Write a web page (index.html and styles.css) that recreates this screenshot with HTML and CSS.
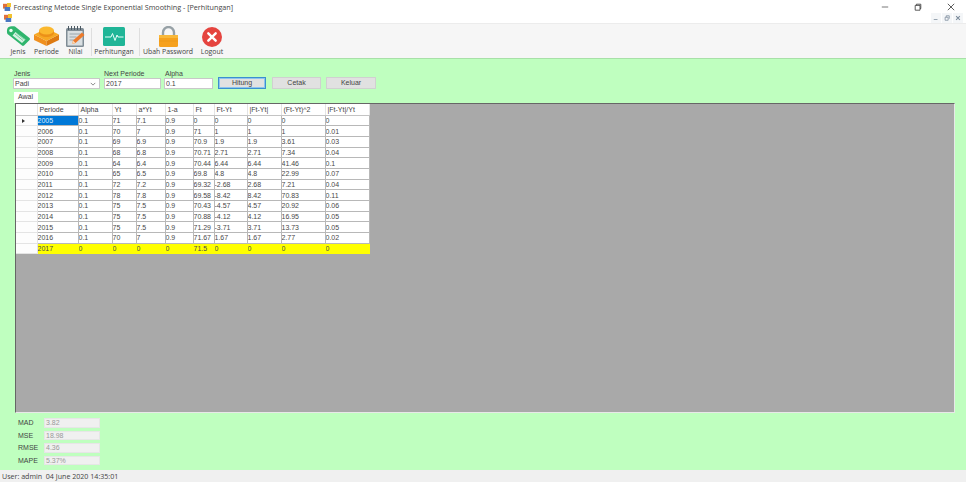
FILE: index.html
```html
<!DOCTYPE html>
<html lang="id">
<head>
<meta charset="utf-8">
<title>Forecasting Metode Single Exponential Smoothing</title>
<link rel="stylesheet" href="styles.css">
</head>
<body>
<div class="window">
  <header class="titlebar">
    <svg class="appicon" viewBox="0 0 10 10"><rect x="0" y="1" width="6" height="6" fill="#e2703a"/><rect x="5" y="0" width="5" height="5" fill="#f2c230"/><rect x="2" y="5" width="7" height="5" fill="#4a78c2"/></svg>
    <span class="title">Forecasting Metode Single Exponential Smoothing - [Perhitungan]</span>
    <div class="winbtns">
      <svg viewBox="0 0 10 10"><path d="M1 5h8" stroke="#555" fill="none"/></svg>
      <svg viewBox="0 0 10 10"><path d="M1.500 3h6v6h-6zM3 3V1.500h5.500V7H7.500" stroke="#333" fill="none"/></svg>
      <svg viewBox="0 0 10 10"><path d="M1 1l8 8M9 1l-8 8" stroke="#333" fill="none"/></svg>
    </div>
  </header>
  <div class="menubar">
    <svg class="appicon" viewBox="0 0 10 10"><rect x="0" y="1" width="6" height="6" fill="#e2703a"/><rect x="5" y="0" width="5" height="5" fill="#f2c230"/><rect x="2" y="5" width="7" height="5" fill="#4a78c2"/></svg>
    <div class="mdibtns">
      <span class="mdibtn"><svg viewBox="0 0 8 8"><path d="M1 6h5" stroke="#7a8a99" fill="none"/></svg></span>
      <span class="mdibtn"><svg viewBox="0 0 8 8"><path d="M1.500 3h4v4h-4zM3 3V1h4v4" stroke="#7a8a99" fill="none"/></svg></span>
      <span class="mdibtn"><svg viewBox="0 0 8 8"><path d="M1.500 1.500l5 5M6.500 1.500l-5 5" stroke="#7a8a99" stroke-width="1.400" fill="none"/></svg></span>
    </div>
  </div>
  <nav class="toolbar">
    <div class="tool tool-jenis">
      <svg viewBox="0 0 24 20"><path d="M2 1.500C3 .500 7 0 9 .500L23.500 12c.6.500.6 1.500 0 2L18 19.500c-.6.600-1.500.6-2 0L1.500 8C.500 6.500 1 2.500 2 1.500z" fill="#2fb56d"/><path d="M9.500 6L19.500 13.500 16 17 6.500 9.500z" fill="#d6f2e2"/><path d="M9 8l8 6.500M10.500 7l8 6.500" stroke="#2fb56d" stroke-width=".6"/><circle cx="5" cy="4.500" r="1.700" fill="#eafff2"/></svg>
      <span>Jenis</span>
    </div>
    <div class="tool tool-periode">
      <svg viewBox="0 0 25 20"><path d="M0 8.500L12.500 15v5L0 14z" fill="#f0901f"/><path d="M25 8.500L12.500 15v5L25 14z" fill="#dd7a12"/><path d="M12.500 2.500L25 8.500 12.500 15 0 8.500z" fill="#f7a823"/><path d="M5 4.500v2.500c0 2.200 3.400 4 7.500 4s7.500-1.800 7.500-4V4.500z" fill="#ec9018"/><ellipse cx="12.500" cy="4.500" rx="7.500" ry="4" fill="#fbb82e"/></svg>
      <span>Periode</span>
    </div>
    <div class="tool tool-nilai">
      <svg viewBox="0 0 19 21"><rect x="0" y="2" width="18" height="19" rx="1.500" fill="#7f8c95"/><rect x="1.500" y="5" width="15" height="14.500" fill="#d9dfe2"/><path d="M2.500 0v4M5.500 0v4M8.500 0v4M11.500 0v4M14.500 0v4" stroke="#4c5a63"/><path d="M3.500 8h11M3.500 11h7M3.500 14h5" stroke="#9aa6ad"/><path d="M6 18l1-3.500 9-8 2.500 2.500-9 8z" fill="#ec7a2b"/><path d="M6 18l1-3.500 2.500 2.500z" fill="#f8d9b5"/></svg>
      <span>Nilai</span>
    </div>
    <i class="sep"></i>
    <div class="tool tool-hitung">
      <svg viewBox="0 0 22 19"><rect width="22" height="19" rx="1.500" fill="#1fb597"/><path d="M2 10h6l1.500-3.500 2.500 7 2-5.500 1 2h5.500" stroke="#e8fff9" stroke-width="1" fill="none"/></svg>
      <span>Perhitungan</span>
    </div>
    <i class="sep"></i>
    <div class="tool tool-pass">
      <svg viewBox="0 0 19 21"><path d="M4 10V6.500a5.500 5.500 0 0 1 11 0V10" fill="none" stroke="#97a1a6" stroke-width="2.400"/><rect x="0" y="9" width="19" height="12" rx="1.500" fill="#f6a11e"/><rect x="0" y="9" width="19" height="3" fill="#f9b83a"/><path d="M0 15h19" stroke="#e89516" stroke-width=".6"/></svg>
      <span>Ubah Password</span>
    </div>
    <div class="tool tool-logout">
      <svg viewBox="0 0 20 20"><circle cx="10" cy="10" r="10" fill="#e5443f"/><path d="M6.300 6.300l7.400 7.400M13.700 6.300l-7.400 7.400" stroke="#fff" stroke-width="2.400" stroke-linecap="round"/></svg>
      <span>Logout</span>
    </div>
  </nav>
  <main class="content">
    <form class="form">
      <div class="field f-jenis">
        <label>Jenis</label>
        <div class="select">Padi<svg viewBox="0 0 8 5"><path d="M1 1l3 3 3-3" stroke="#666" fill="none"/></svg></div>
      </div>
      <div class="field f-next">
        <label>Next Periode</label>
        <div class="input">2017</div>
      </div>
      <div class="field f-alpha">
        <label>Alpha</label>
        <div class="input">0.1</div>
      </div>
      <div class="btns">
        <span class="btn primary">Hitung</span>
        <span class="btn b-cetak">Cetak</span>
        <span class="btn b-keluar">Keluar</span>
      </div>
    </form>
    <div class="tab">Awal</div>
    <section class="gridpanel">
      <table class="grid">
        <colgroup><col class="c0"><col class="c1"><col class="c2"><col class="c3"><col class="c4"><col class="c5"><col class="c6"><col class="c7"><col class="c8"><col class="c9"><col class="c10"></colgroup>
        <thead>
          <tr><th></th><th>Periode</th><th>Alpha</th><th>Yt</th><th>a*Yt</th><th>1-a</th><th>Ft</th><th>Ft-Yt</th><th>|Ft-Yt|</th><th>(Ft-Yt)^2</th><th>|Ft-Yt|/Yt</th></tr>
        </thead>
        <tbody>
          <tr><td class="rh"><span class="arrow"></span></td><td class="sel">2005</td><td>0.1</td><td>71</td><td>7.1</td><td>0.9</td><td>0</td><td>0</td><td>0</td><td>0</td><td>0</td></tr>
          <tr><td class="rh"></td><td>2006</td><td>0.1</td><td>70</td><td>7</td><td>0.9</td><td>71</td><td>1</td><td>1</td><td>1</td><td>0.01</td></tr>
          <tr><td class="rh"></td><td>2007</td><td>0.1</td><td>69</td><td>6.9</td><td>0.9</td><td>70.9</td><td>1.9</td><td>1.9</td><td>3.61</td><td>0.03</td></tr>
          <tr><td class="rh"></td><td>2008</td><td>0.1</td><td>68</td><td>6.8</td><td>0.9</td><td>70.71</td><td>2.71</td><td>2.71</td><td>7.34</td><td>0.04</td></tr>
          <tr><td class="rh"></td><td>2009</td><td>0.1</td><td>64</td><td>6.4</td><td>0.9</td><td>70.44</td><td>6.44</td><td>6.44</td><td>41.46</td><td>0.1</td></tr>
          <tr><td class="rh"></td><td>2010</td><td>0.1</td><td>65</td><td>6.5</td><td>0.9</td><td>69.8</td><td>4.8</td><td>4.8</td><td>22.99</td><td>0.07</td></tr>
          <tr><td class="rh"></td><td>2011</td><td>0.1</td><td>72</td><td>7.2</td><td>0.9</td><td>69.32</td><td>-2.68</td><td>2.68</td><td>7.21</td><td>0.04</td></tr>
          <tr><td class="rh"></td><td>2012</td><td>0.1</td><td>78</td><td>7.8</td><td>0.9</td><td>69.58</td><td>-8.42</td><td>8.42</td><td>70.83</td><td>0.11</td></tr>
          <tr><td class="rh"></td><td>2013</td><td>0.1</td><td>75</td><td>7.5</td><td>0.9</td><td>70.43</td><td>-4.57</td><td>4.57</td><td>20.92</td><td>0.06</td></tr>
          <tr><td class="rh"></td><td>2014</td><td>0.1</td><td>75</td><td>7.5</td><td>0.9</td><td>70.88</td><td>-4.12</td><td>4.12</td><td>16.95</td><td>0.05</td></tr>
          <tr><td class="rh"></td><td>2015</td><td>0.1</td><td>75</td><td>7.5</td><td>0.9</td><td>71.29</td><td>-3.71</td><td>3.71</td><td>13.73</td><td>0.05</td></tr>
          <tr><td class="rh"></td><td>2016</td><td>0.1</td><td>70</td><td>7</td><td>0.9</td><td>71.67</td><td>1.67</td><td>1.67</td><td>2.77</td><td>0.02</td></tr>
          <tr class="hl"><td class="rh"></td><td>2017</td><td>0</td><td>0</td><td>0</td><td>0</td><td>71.5</td><td>0</td><td>0</td><td>0</td><td>0</td></tr>
        </tbody>
      </table>
    </section>
    <section class="stats">
      <div class="stat"><label>MAD</label><div class="ro">3.82</div></div>
      <div class="stat"><label>MSE</label><div class="ro">18.98</div></div>
      <div class="stat"><label>RMSE</label><div class="ro">4.36</div></div>
      <div class="stat"><label>MAPE</label><div class="ro">5.37%</div></div>
    </section>
  </main>
  <footer class="status">User: admin&nbsp; 04 June 2020 14:35:01</footer>
</div>
</body>
</html>
```

FILE: styles.css
```css
* { box-sizing: border-box; }
html, body { margin: 0; padding: 0; }
body { width: 966px; height: 482px; overflow: hidden; background: #fff; color: #444; font-family: "Liberation Sans", Arial, sans-serif; font-size: 7px; }
.window { width: 966px; height: 482px; display: flex; flex-direction: column; }

.titlebar { height: 13px; display: flex; align-items: center; padding-left: 3px; background: #fff; }
.appicon { width: 8px; height: 8px; flex: none; }
.title { margin-left: 2.500px; font-family: "Open Sans", sans-serif; font-size: 7.200px; color: #444; white-space: nowrap; }
.winbtns { margin-left: auto; display: flex; gap: 25px; padding-right: 11px; }
.winbtns svg { width: 8px; height: 8px; }

.menubar { height: 10px; display: flex; align-items: center; padding-left: 3.500px; background: #fff; }
.mdibtns { margin-left: auto; display: flex; gap: 1px; padding-right: 3px; }
.mdibtn { width: 10px; height: 10px; background: #f4f6f8; display: flex; align-items: center; justify-content: center; }
.mdibtn svg { width: 6px; height: 6px; }

.toolbar { height: 35px; display: flex; align-items: flex-start; padding: 2px 0 0 6px; background: #f6f6f6; border-top: 1px solid #ececec; font-family: "Open Sans", sans-serif; }
.tool { display: flex; flex-direction: column; align-items: center; font-size: 6.900px; color: #444; white-space: nowrap; flex: none; }
.tool svg { display: block; flex: none; height: 20px; margin-bottom: 1px; }
.tool span { line-height: 9px; }
.tool-jenis { width: 24px; }
.tool-jenis svg { width: 24px; }
.tool-periode { width: 25px; margin-left: 4px; }
.tool-periode svg { width: 25px; }
.tool-nilai { width: 19px; margin-left: 7px; }
.tool-nilai svg { width: 19px; height: 21px; margin-bottom: 0; }
.sep { width: 1px; height: 28px; margin: 2px 0 0 6px; background: #dedede; flex: none; }
.tool-hitung { width: 40px; margin-left: 2px; }
.tool-hitung svg { width: 22px; height: 19px; margin: 1px 0 1px; }
.tool-hitung + .sep { margin-left: 5px; }
.tool-pass { width: 50px; margin-left: 3px; }
.tool-pass svg { width: 19px; height: 21px; margin-bottom: 0; }
.tool-logout { width: 24px; margin-left: 7px; }
.tool-logout svg { width: 20px; height: 20px; margin: 1px 0 0; }

.content { flex: 1; min-height: 0; background: #bfffbf; border-top: 1px solid #a8e0a8; padding: 11px 11px 0 14px; display: flex; flex-direction: column; }

.form { height: 22px; display: flex; align-items: flex-start; flex: none; }
.field { display: flex; flex-direction: column; margin-left: 3px; }
.field label { line-height: 8px; height: 8px; padding-left: 1px; }
.f-jenis { width: 87px; margin-left: -1px; }
.f-next { width: 57px; margin-left: 4px; }
.f-next label { padding-left: 0; }
.f-alpha { width: 49px; }
.select, .input { height: 11px; line-height: 10px; background: #fff; border: 1px solid #c8c8c8; padding-left: 1px; white-space: nowrap; }
.select { display: flex; align-items: center; justify-content: space-between; padding-right: 3px; }
.select svg { width: 6px; height: 4px; }
.btns { display: flex; padding-top: 7px; margin-left: 5px; }
.btn { height: 12px; width: 49px; line-height: 10px; text-align: center; background: #e1e1e1; border: 1px solid #d0d0d0; }
.btn.primary { width: 48px; border: 1px solid #3b8fd0; box-shadow: inset 0 0 0 1px #8dc4ec; }
.b-cetak { margin-left: 6px; }
.b-keluar { margin-left: 5px; width: 50px; }

.tab { width: 24px; height: 11px; line-height: 10px; padding-right: 1px; background: #fff; text-align: center; flex: none; }

.gridpanel { margin-left: 1px; width: 940px; height: 310px; background: #a9a9a9; border: 1px solid #e8e8e8; border-top-color: #666; border-left-color: #666; flex: none; }
.grid { border-collapse: collapse; table-layout: fixed; width: 353px; background: #fff; }
.c0 { width: 21px; } .c1 { width: 41px; } .c2 { width: 34px; } .c3 { width: 24px; } .c4 { width: 29px; }
.c5 { width: 28px; } .c6 { width: 21px; } .c7 { width: 33px; } .c8 { width: 34px; } .c9 { width: 44px; } .c10 { width: 44px; }
.grid tr { height: 10.700px; }
.grid thead tr { height: 11px; }
.grid th { font-weight: 400; border-right: 1px solid #e4e4e4; border-bottom: 1px solid #c4c4c4; text-align: left; padding: 0 0 0 2px; white-space: nowrap; overflow: hidden; }
.grid td { padding: 0; border: 1px solid #b8b8b8; border-width: 0 1px 1px 0; white-space: nowrap; overflow: hidden; line-height: 9px; color: #484848; }
.grid td.rh { background: #fdfdfd; border-color: #e4e4e4; text-align: center; }
.grid td.sel { background: #0078d7; color: #dbeeff; }
.grid .hl td:not(.rh) { background: #ffff00; border-color: #ffff00; }
.arrow { display: inline-block; border-left: 3px solid #333; border-top: 2px solid transparent; border-bottom: 2px solid transparent; margin-left: -6px; }

.stats { padding: 5px 0 0 4px; display: flex; flex-direction: column; gap: 3px; flex: none; }
.stat { display: flex; align-items: center; }
.stat label { width: 26px; flex: none; }
.ro { width: 56px; height: 9.500px; line-height: 8.500px; padding-left: 1px; background: #f0f0f0; border: 1px solid #e6e6e6; color: #999; }

.status { height: 12px; line-height: 12px; padding-left: 2px; background: #f0f0f0; font-family: "Open Sans", sans-serif; font-size: 7.100px; color: #444; white-space: nowrap; flex: none; }
```
